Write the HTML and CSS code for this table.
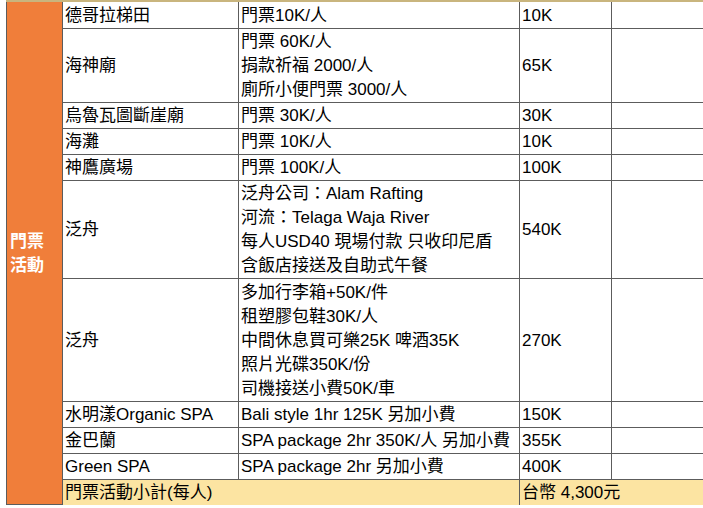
FILE: index.html
```html
<!DOCTYPE html>
<html lang="zh-Hant">
<head>
<meta charset="utf-8">
<title>門票活動</title>
<link rel="stylesheet" href="styles.css">
</head>
<body>
<div class="wrap">
<table class="sheet">
  <colgroup>
    <col class="c-cat">
    <col class="c-name">
    <col class="c-desc">
    <col class="c-price">
    <col class="c-extra">
  </colgroup>
  <tbody>
    <tr class="first">
      <td class="cat" rowspan="11">門票<br>活動</td>
      <td>德哥拉梯田</td>
      <td>門票10K/人</td>
      <td>10K</td>
      <td></td>
    </tr>
    <tr>
      <td>海神廟</td>
      <td>門票 60K/人<br>捐款祈福 2000/人<br>廁所小便門票 3000/人</td>
      <td>65K</td>
      <td></td>
    </tr>
    <tr>
      <td>烏魯瓦圖斷崖廟</td>
      <td>門票 30K/人</td>
      <td>30K</td>
      <td></td>
    </tr>
    <tr>
      <td>海灘</td>
      <td>門票 10K/人</td>
      <td>10K</td>
      <td></td>
    </tr>
    <tr>
      <td>神鷹廣場</td>
      <td>門票 100K/人</td>
      <td>100K</td>
      <td></td>
    </tr>
    <tr>
      <td>泛舟</td>
      <td>泛舟公司：Alam Rafting<br>河流：Telaga Waja River<br>每人USD40 現場付款 只收印尼盾<br>含飯店接送及自助式午餐</td>
      <td>540K</td>
      <td></td>
    </tr>
    <tr>
      <td>泛舟</td>
      <td>多加行李箱+50K/件<br>租塑膠包鞋30K/人<br>中間休息買可樂25K 啤酒35K<br>照片光碟350K/份<br>司機接送小費50K/車</td>
      <td>270K</td>
      <td></td>
    </tr>
    <tr>
      <td>水明漾Organic SPA</td>
      <td>Bali style 1hr 125K 另加小費</td>
      <td>150K</td>
      <td></td>
    </tr>
    <tr>
      <td>金巴蘭</td>
      <td>SPA package 2hr 350K/人 另加小費</td>
      <td>355K</td>
      <td></td>
    </tr>
    <tr>
      <td>Green SPA</td>
      <td>SPA package 2hr 另加小費</td>
      <td>400K</td>
      <td></td>
    </tr>
    <tr class="total">
      <td colspan="2">門票活動小計(每人)</td>
      <td colspan="2">台幣 4,300元</td>
    </tr>
  </tbody>
</table>
</div>
</body>
</html>
```

FILE: styles.css
```css
html, body {
  margin: 0;
  padding: 0;
  background: #ffffff;
  overflow: hidden;
}

.wrap {
  width: 703px;
  height: 508px;
  overflow: hidden;
  padding-left: 6px;
  box-sizing: border-box;
}

.sheet {
  border-collapse: collapse;
  table-layout: fixed;
  width: 740px;
  font-family: "Liberation Sans", "Noto Sans CJK TC", sans-serif;
  font-size: 17px;
  line-height: 24px;
  color: #000;
  border-top: 2px solid #c9b57e;
}

.c-cat { width: 56px; }
.c-name { width: 176px; }
.c-desc { width: 281px; }
.c-price { width: 92px; }
.c-extra { width: 135px; }

.sheet td {
  border: 1px solid #5c5c5c;
  padding: 1.1px 2px 0 2px;
  vertical-align: middle;
  text-align: left;
  white-space: nowrap;
  overflow: hidden;
}

.first td {
  padding-top: 2px;
}

.sheet td.cat {
  background: #f07e3a;
  color: #ffffff;
  font-weight: bold;
  padding-left: 3px;
  padding-top: 1.1px;
  border-top: 1px solid #c77a8a;
  vertical-align: middle;
}

.total td {
  background: #fce4a2;
  border-bottom: none;
}
```
